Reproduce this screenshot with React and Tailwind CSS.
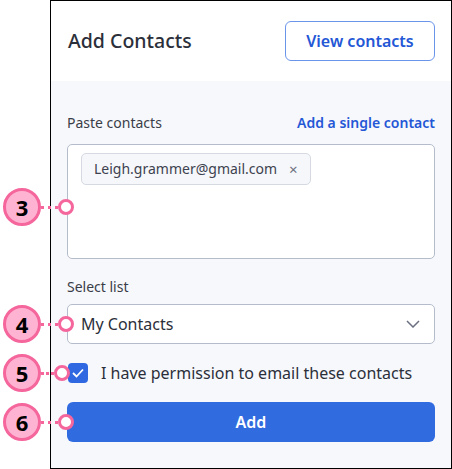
import React, { useState } from 'react';

const font = { fontFamily: '"Noto Sans", "Lato", sans-serif' };

// Numbered pink marker with a dotted leader ending in a hollow ring
function Callout({ n, top, ringLeft = 68 }) {
    return (
        <div className="absolute left-0 flex items-center" style={{ top: top - 19 }}>
            <div className="w-[38px] h-[38px] ml-[3px] rounded-full bg-[#ffb3d2] border-[3px] border-[#f4669c] flex items-center justify-center text-[22px] font-bold text-black leading-none">
                {n}
            </div>
            <div
                className="h-0 border-t-[3px] border-dotted border-[#f4669c]"
                style={{ width: ringLeft - 41 - 7 - 3 }}
            />
            <div className="w-[16px] h-[16px] rounded-full bg-white border-[3px] border-[#f4669c]" />
        </div>
    );
}

export default function App() {
    const [checked, setChecked] = useState(true);

    return (
        <div className="relative w-[452px] h-[469px] bg-white" style={font}>
            <div className="ml-[50px] w-[402px] h-[469px] border border-black flex flex-col">
                <div className="h-[80px] shrink-0 bg-white flex items-center justify-between pl-[17px] pr-[16px]">
                    <h1 className="text-[19.5px] font-medium text-[#2b2f3a] leading-none">Add Contacts</h1>
                    <button className="w-[150px] h-[40px] rounded-[6px] border-[1.5px] border-[#6b95ea] text-[#2457d6] font-semibold text-[16px] leading-none">
                        View contacts
                    </button>
                </div>
                <div className="flex-1 bg-[#f7f8fc] px-[16px] pt-[34px]">
                    <div className="flex items-center justify-between text-[14px] leading-[16px]">
                        <span className="text-[#3a3e48]">Paste contacts</span>
                        <a className="text-[#2457d6] font-semibold">Add a single contact</a>
                    </div>
                    <div className="mt-[13px] h-[115px] bg-white border border-[#b4bccb] rounded-[5px] p-[8px] pl-[13px]">
                        <div className="inline-flex items-center h-[32px] px-[12px] gap-[12px] bg-[#f6f7fa] border border-[#d5d9e2] rounded-[5px] text-[14px] leading-none text-[#3d4250]">
                            Leigh.grammer@gmail.com
                            <span className="text-[#6b7080] text-[15px]">×</span>
                        </div>
                    </div>
                    <div className="mt-[20px] text-[14px] leading-[16px] text-[#3a3e48]">Select list</div>
                    <div className="mt-[9px] h-[40px] bg-white border border-[#b4bccb] rounded-[5px] flex items-center justify-between pl-[13px] pr-[14px]">
                        <span className="text-[16px] leading-none text-[#2b2f3a]">My Contacts</span>
                        <svg width="14" height="8" viewBox="0 0 14 8" fill="none">
                            <path d="M1 1l6 6 6-6" stroke="#6b7080" strokeWidth="1.5" />
                        </svg>
                    </div>
                    <label className="mt-[19px] h-[20px] flex items-center gap-[13px] cursor-pointer">
                        <span
                            onClick={() => setChecked(!checked)}
                            className="w-[20px] h-[20px] ml-[1px] shrink-0 rounded-[4px] bg-[#2f68e0] flex items-center justify-center"
                        >
                            {checked && (
                                <svg width="12" height="10" viewBox="0 0 12 10" fill="none">
                                    <path d="M1 5l3.5 3.5L11 1.5" stroke="white" strokeWidth="1.8" />
                                </svg>
                            )}
                        </span>
                        <span className="text-[16px] leading-none text-[#2b2f3a]">I have permission to email these contacts</span>
                    </label>
                    <button className="mt-[19px] w-full h-[40px] rounded-[6px] bg-[#316be0] text-white font-semibold text-[16px] leading-none">
                        Add
                    </button>
                </div>
            </div>

            <Callout n={3} top={207} />
            <Callout n={4} top={324} />
            <Callout n={5} top={373} ringLeft={64} />
            <Callout n={6} top={422} />
        </div>
    );
}
